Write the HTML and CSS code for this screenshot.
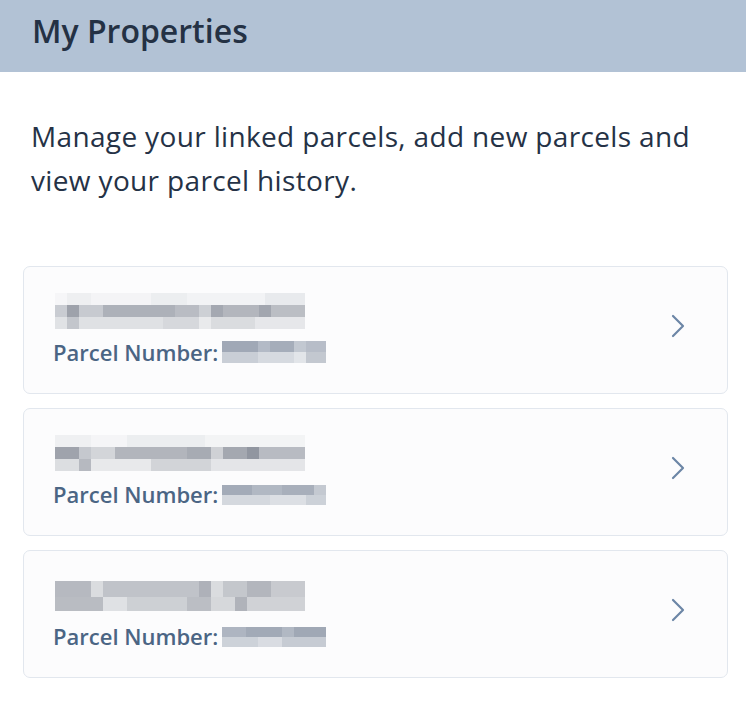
FILE: index.html
```html
<!DOCTYPE html>
<html>
<head>
  <meta charset="utf-8">
  <title>My Properties</title>
  <link rel="stylesheet" href="styles.css">
</head>
<body>
  <div class="header">
    <h1>My Properties</h1>
  </div>

  <div class="content">
    <p class="intro">Manage your linked parcels, add new parcels and view your parcel history.</p>

    <ul class="parcels">
      <li class="parcel">
        <div class="parcel-info">
          <div class="blur name name-1"></div>
          <div class="parcel-number">
            Parcel Number: <span class="blur number number-1"></span>
          </div>
        </div>
        <svg class="chevron" width="14" height="24" viewBox="0 0 14 24">
          <path d="M2 2 L12 12 L2 22" />
        </svg>
      </li>
      <li class="parcel">
        <div class="parcel-info">
          <div class="blur name name-2"></div>
          <div class="parcel-number">
            Parcel Number: <span class="blur number number-2"></span>
          </div>
        </div>
        <svg class="chevron" width="14" height="24" viewBox="0 0 14 24">
          <path d="M2 2 L12 12 L2 22" />
        </svg>
      </li>
      <li class="parcel">
        <div class="parcel-info">
          <div class="blur name name-3"></div>
          <div class="parcel-number">
            Parcel Number: <span class="blur number number-3"></span>
          </div>
        </div>
        <svg class="chevron" width="14" height="24" viewBox="0 0 14 24">
          <path d="M2 2 L12 12 L2 22" />
        </svg>
      </li>
    </ul>
  </div>
</body>
</html>
```

FILE: styles.css
```css
body {
  margin: 0;
  font-family: "Open Sans", Arial, sans-serif;
  color: #253246;
  background: #fff;
}

.header {
  background: #b2c2d5;
  height: 72px;
  padding: 0 32px;
  display: flex;
  align-items: center;
}

.header h1 {
  margin: 0 0 12px;
  font-size: 32px;
  font-weight: 600;
  color: #243144;
}

.content {
  padding: 0 18px 0 23px;
}

.intro {
  margin: 42px 0 0 8px;
  font-size: 28px;
  line-height: 44px;
  letter-spacing: 0.35px;
  color: #253246;
}

.parcels {
  list-style: none;
  margin: 64px 0 0;
  padding: 0;
  display: flex;
  flex-direction: column;
  gap: 14px;
}

.parcel {
  height: 126px;
  border: 1px solid #e2e7ee;
  border-radius: 7px;
  background: #fcfcfd;
  display: flex;
  align-items: center;
  padding: 0 42px 0 29px;
}

.parcel-info {
  flex: 1;
  display: flex;
  flex-direction: column;
  gap: 8px;
}

.parcel-number {
  display: flex;
  align-items: center;
  line-height: 30px;
  font-size: 22px;
  font-weight: 600;
  color: #4b6584;
}

.blur {
  display: block;
}

.name {
  width: 250px;
  height: 36px;
  margin-left: 2px;
}

.number {
  width: 104px;
  height: 22px;
  margin-left: 4px;
}

.name-1 {
  background:
    linear-gradient(90deg, #f6f6f8 0 12px, #eeeff1 12px 36px, #f4f4f6 36px 96px, #eceef0 96px 132px, #f2f3f5 132px 210px, #e8eaed 210px 250px) 0 0 / 250px 12px no-repeat,
    linear-gradient(90deg, #c9ccd2 0 12px, #9ea2ab 12px 24px, #c7cad0 24px 48px, #adb1b9 48px 120px, #b9bcc3 120px 144px, #cdd0d5 144px 156px, #a4a8b1 156px 168px, #b3b6bd 168px 204px, #a2a6af 204px 216px, #bbbec4 216px 250px) 0 12px / 250px 12px no-repeat,
    linear-gradient(90deg, #e0e2e5 0 12px, #c3c6cc 12px 24px, #dfe1e4 24px 108px, #d6d8dc 108px 144px, #e9eaec 144px 156px, #dadcdf 156px 200px, #e6e7ea 200px 250px) 0 24px / 250px 12px no-repeat;
}

.name-2 {
  background:
    linear-gradient(90deg, #eff0f2 0 36px, #f5f5f7 36px 72px, #eceef0 72px 150px, #f3f4f5 150px 250px) 0 0 / 250px 12px no-repeat,
    linear-gradient(90deg, #9fa3ac 0 24px, #c5c8ce 24px 36px, #d3d5d9 36px 60px, #b2b5bc 60px 132px, #a7abb3 132px 156px, #cfd1d5 156px 168px, #a4a8b0 168px 192px, #9196a0 192px 204px, #b8bbc2 204px 250px) 0 12px / 250px 12px no-repeat,
    linear-gradient(90deg, #dcdee1 0 24px, #b6b9c0 24px 36px, #e8e9eb 36px 96px, #d2d4d8 96px 156px, #e4e5e8 156px 250px) 0 24px / 250px 12px no-repeat;
}

.name-3 {
  background:
    linear-gradient(90deg, #b6b9c0 0 36px, #dadcdf 36px 48px, #c0c3c9 48px 144px, #aeb1b9 144px 156px, #dadcdf 156px 168px, #c4c7cc 168px 192px, #b3b6bd 192px 216px, #c8cacf 216px 250px) 0 4px / 250px 16px no-repeat,
    linear-gradient(90deg, #b9bcc2 0 48px, #dfe1e4 48px 72px, #cdd0d4 72px 132px, #bbbec4 132px 156px, #d6d8db 156px 180px, #b0b3ba 180px 192px, #d0d2d6 192px 250px) 0 20px / 250px 14px no-repeat;
}

.number-1 {
  background:
    linear-gradient(90deg, #a0a8b6 0 36px, #b3bac6 36px 48px, #a5adba 48px 72px, #c2c8d1 72px 84px, #b7bdc8 84px 104px) 0 0 / 104px 11px no-repeat,
    linear-gradient(90deg, #c9ced6 0 36px, #d6dae0 36px 72px, #e2e5e9 72px 84px, #c3c8d0 84px 104px) 0 11px / 104px 11px no-repeat;
}

.number-2 {
  background:
    linear-gradient(90deg, #a3abb8 0 30px, #b1b8c3 30px 60px, #a8afbb 60px 92px, #c4c9d1 92px 104px) 0 2px / 104px 10px no-repeat,
    linear-gradient(90deg, #d4d8de 0 48px, #dcdfe4 48px 84px, #ccd1d8 84px 104px) 0 12px / 104px 10px no-repeat;
}

.number-3 {
  background:
    linear-gradient(90deg, #aeb5c1 0 24px, #a2aab7 24px 60px, #b1b8c3 60px 72px, #a0a8b5 72px 104px) 0 2px / 104px 10px no-repeat,
    linear-gradient(90deg, #cdd2d9 0 36px, #d9dce2 36px 60px, #c6cbd3 60px 104px) 0 12px / 104px 10px no-repeat;
}

.chevron {
  flex: none;
  margin-bottom: 8px;
}

.chevron path {
  fill: none;
  stroke: #6c86a6;
  stroke-width: 2.2;
  stroke-linecap: round;
  stroke-linejoin: round;
}
```
